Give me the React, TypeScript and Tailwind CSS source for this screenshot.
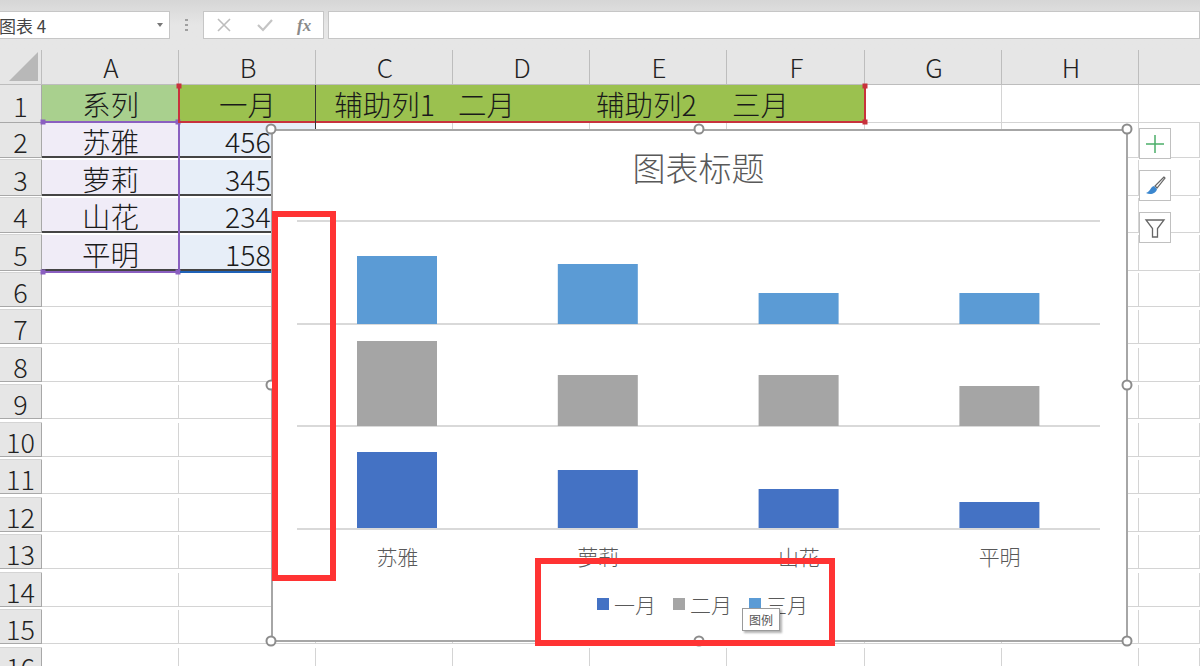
const cols = ["A", "B", "C", "D", "E", "F", "G", "H"];
const rows = [1, 2, 3, 4, 5, 6, 7, 8, 9, 10, 11, 12, 13, 14, 15, 16];
const names = ["苏雅", "萝莉", "山花", "平明"];
const values = ["456", "345", "234", "158"];
const gridCols = "grid grid-cols-[42px_137px_137px_137px_137px_137px_138px_137px_137px_1fr]";

const series = [
  { color: "#5b9bd5", tops: [256, 264, 293, 293], base: 324 },
  { color: "#a5a5a5", tops: [341, 375, 375, 386], base: 426 },
  { color: "#4472c4", tops: [452, 470, 489, 502], base: 528 },
];

function Handle({ className }: { className: string }) {
  return <div className={`absolute h-[11px] w-[11px] -translate-x-1/2 -translate-y-1/2 rounded-full border-2 border-[#8c8c8c] bg-white ${className}`} />;
}

function Dot({ className }: { className: string }) {
  return <div className={`absolute h-[5px] w-[5px] -translate-x-1/2 -translate-y-1/2 ${className}`} />;
}

function Row1() {
  const base = "flex h-full items-center border-b border-[#c9d9a8] bg-[#9bc14f] pt-[2px] text-[#1a1a1a] whitespace-nowrap";
  return (
    <>
      <div className="flex items-center justify-center border-b border-[#c6dbb0] bg-[#a9d08e] pt-[2px]">系列</div>
      <div className={`${base} justify-center`}>一月</div>
      <div className={`${base} justify-center`}>辅助列1</div>
      <div className={`${base} pl-[5px]`}>二月</div>
      <div className={`${base} pl-[6px]`}>辅助列2</div>
      <div className={`${base} pl-[5px]`}>三月</div>
      <div className="border-r border-b border-[#d4d4d4]" />
      <div className="border-r border-b border-[#d4d4d4]" />
      <div className="border-b border-[#d4d4d4]" />
    </>
  );
}

function Cells({ row }: { row: number }) {
  const data = row >= 2 && row <= 5;
  return (
    <>
      {data ? (
        <div className="flex items-center justify-center border-b-2 border-[#444444] bg-[#f0ecf7] pt-[4px]">{names[row - 2]}</div>
      ) : (
        <div className="border-r border-b border-[#d4d4d4]" />
      )}
      {data ? (
        <div className="flex items-center justify-start border-b-2 border-[#444444] bg-[#e7eef8] pt-[4px] pl-[46px]">
          <span>{values[row - 2]}</span>
        </div>
      ) : (
        <div className="border-r border-b border-[#d4d4d4]" />
      )}
      {[0, 1, 2, 3, 4, 5, 6].map((i) => (
        <div key={i} className="border-r border-b border-[#d4d4d4]" />
      ))}
      <div className="border-b border-[#d4d4d4]" />
    </>
  );
}

function Chart() {
  return (
    <div className="absolute top-[129px] left-[271px] flex h-[513px] w-[857px] flex-col border-2 border-[#a6a6a6] bg-white">
      <div className="mt-[14px] -ml-[2px] text-center text-[33px] leading-[44px] text-[#595959]">图表标题</div>
      <svg className="mt-[31px] block" width="853" height="312" viewBox="273 220 853 312">
        {[221, 324, 426, 529].map((y) => (
          <line key={y} x1="297" x2="1100" y1={y} y2={y} stroke="#d9d9d9" strokeWidth="2" />
        ))}
        {series.map((s) =>
          s.tops.map((top, i) => (
            <rect key={s.color + i} x={357 + i * 200.8} y={top} width="80" height={s.base - top} fill={s.color} />
          )),
        )}
      </svg>
      <div className="mt-[10px] ml-[24px] grid w-[803px] grid-cols-4 text-center text-[21px] leading-[28px] text-[#595959]">
        {names.map((n) => (
          <div key={n}>{n}</div>
        ))}
      </div>
      <div className="mt-[20px] ml-[324px] flex items-center text-[21px] leading-[28px] text-[#595959]">
        <span className="mr-[5px] h-[12px] w-[12px] bg-[#4472c4]" />
        <span className="mr-[17px]">一月</span>
        <span className="mr-[5px] h-[12px] w-[12px] bg-[#a5a5a5]" />
        <span className="mr-[17px]">二月</span>
        <span className="mr-[5px] h-[12px] w-[12px] bg-[#5b9bd5]" />
        <span>三月</span>
      </div>
    </div>
  );
}

export default function App() {
  return (
    <div className="relative h-[666px] w-[1200px] overflow-hidden bg-white font-['Noto_Sans_CJK_SC','Noto_Sans',sans-serif] text-[28.5px] leading-none font-light text-[#1a1a1a]">
      {/* formula bar */}
      <div className="flex h-[50px] items-start bg-gradient-to-b from-[#d6d6d6] via-[#e6e6e6] to-[#e6e6e6] pt-[11px]">
        <div className="flex h-[28px] w-[170px] items-center justify-between overflow-hidden border-y border-r border-[#c6c6c6] bg-white pr-[6px] text-[17px] font-normal text-[#444444]">
          <span className="-ml-[1px]">图表 4</span>
          <span className="h-0 w-0 border-x-[3px] border-t-[4px] border-x-transparent border-t-[#777777]" />
        </div>
        <div className="flex h-[28px] w-[33px] items-center justify-center">
          <div className="h-[12px] w-[3px] bg-[repeating-linear-gradient(to_bottom,#a0a0a0_0,#a0a0a0_2px,transparent_2px,transparent_5px)]" />
        </div>
        <div className="flex h-[28px] w-[121px] items-center border border-[#c6c6c6] bg-white">
          <svg className="ml-[13px]" width="14" height="14" viewBox="0 0 14 14" fill="none" stroke="#bdbdbd" strokeWidth="1.6">
            <path d="M1 1 13 13M13 1 1 13" />
          </svg>
          <svg className="ml-[26px]" width="16" height="14" viewBox="0 0 16 14" fill="none" stroke="#c4c4c4" strokeWidth="2.2">
            <path d="M1 7 6 12 15 2" />
          </svg>
          <span className="ml-[24px] font-['Liberation_Serif',serif] text-[17px] font-bold text-[#8a8a8a] italic">fx</span>
        </div>
        <div className="ml-[4px] h-[28px] flex-1 border border-[#c6c6c6] bg-white" />
      </div>

      {/* column headers */}
      <div className={`${gridCols} h-[35px] border-b border-[#bdbdbd] bg-[#e6e6e6] text-[26px] text-[#222222]`}>
        <div className="flex items-end justify-end border-r border-[#bdbdbd] pr-[3px] pb-[3px]">
          <svg width="29" height="29" viewBox="0 0 29 29">
            <path d="M29 0V29H0Z" fill="#b8b8b8" />
          </svg>
        </div>
        {cols.map((c) => (
          <div key={c} className="flex items-center justify-center border-r border-[#bdbdbd] pl-[2px]">
            {c}
          </div>
        ))}
        <div />
      </div>

      {/* sheet */}
      {rows.map((r) => (
        <div key={r} className={`${gridCols} h-[37.5px]`}>
          <div className="flex items-center justify-center border-r border-b border-[#a8a8a8] bg-[#e6e6e6] pt-[4px] text-[27px] text-[#222222]">{r}</div>
          {r === 1 ? <Row1 /> : <Cells row={r} />}
        </div>
      ))}

      {/* selection outlines */}
      <div className="absolute top-[121px] left-[42px] h-[152px] w-[138px] border-y-2 border-r-2 border-[#8a5fc0]" />
      <Dot className="top-[122px] left-[43px] bg-[#8a5fc0]" />
      <Dot className="top-[122px] left-[178px] bg-[#8a5fc0]" />
      <Dot className="top-[272px] left-[43px] bg-[#8a5fc0]" />
      <Dot className="top-[272px] left-[178px] bg-[#8a5fc0]" />
      <div className="absolute top-[85px] left-[178px] h-[38px] w-[688px] border-x-2 border-b-2 border-[#c8323c]" />
      <Dot className="top-[86px] left-[179px] bg-[#c8323c]" />
      <Dot className="top-[86px] left-[865px] bg-[#c8323c]" />
      <Dot className="top-[122px] left-[865px] bg-[#c8323c]" />
      <div className="absolute top-[85px] left-[315px] h-[44px] w-[1px] bg-[#333333]" />
      <div className="absolute top-[271px] left-[180px] h-[2px] w-[92px] bg-[#1f62b8]" />

      <Chart />
      <Handle className="top-[129px] left-[271px]" />
      <Handle className="top-[129px] left-[699px]" />
      <Handle className="top-[129px] left-[1127px]" />
      <Handle className="top-[385px] left-[271px]" />
      <Handle className="top-[385px] left-[1127px]" />
      <Handle className="top-[641px] left-[271px]" />
      <Handle className="top-[641px] left-[699px]" />
      <Handle className="top-[641px] left-[1127px]" />

      {/* chart side buttons */}
      <div className="absolute top-[128px] left-[1139px] flex flex-col gap-[11px]">
        <div className="flex h-[31px] w-[32px] items-center justify-center border border-[#c0c0c0] bg-white">
          <svg width="20" height="20" viewBox="0 0 20 20" stroke="#4caf6a" strokeWidth="1.5">
            <path d="M10 1V19M1 10H19" />
          </svg>
        </div>
        <div className="flex h-[31px] w-[32px] items-center justify-center border border-[#c0c0c0] bg-white">
          <svg width="22" height="20" viewBox="0 0 22 20">
            <path d="M20 1 11 10 13 12 21 2Z" fill="none" stroke="#666666" strokeWidth="1.2" />
            <path d="M10 10C6 11 7 15 2 17 6 19 12 18 13 13Z" fill="#3b87cf" />
          </svg>
        </div>
        <div className="flex h-[31px] w-[32px] items-center justify-center border border-[#c0c0c0] bg-white">
          <svg width="22" height="22" viewBox="0 0 22 22" fill="none" stroke="#666666" strokeWidth="1.3">
            <path d="M2 3H20L13.5 11.5V20H8.5V11.5Z" />
          </svg>
        </div>
      </div>

      {/* tooltip */}
      <div className="absolute top-[608px] left-[742px] flex h-[23px] w-[38px] items-center justify-center border border-[#9a9a9a] bg-white text-[12px] font-normal text-[#555555] shadow-[2px_2px_2px_rgba(0,0,0,0.3)]">
        图例
      </div>

      {/* red annotation boxes */}
      <div className="absolute top-[211px] left-[272px] h-[370px] w-[64px] border-[6px] border-[#ff3333]" />
      <div className="absolute top-[558px] left-[535px] h-[88px] w-[300px] border-[6px] border-[#ff3333]" />
    </div>
  );
}
